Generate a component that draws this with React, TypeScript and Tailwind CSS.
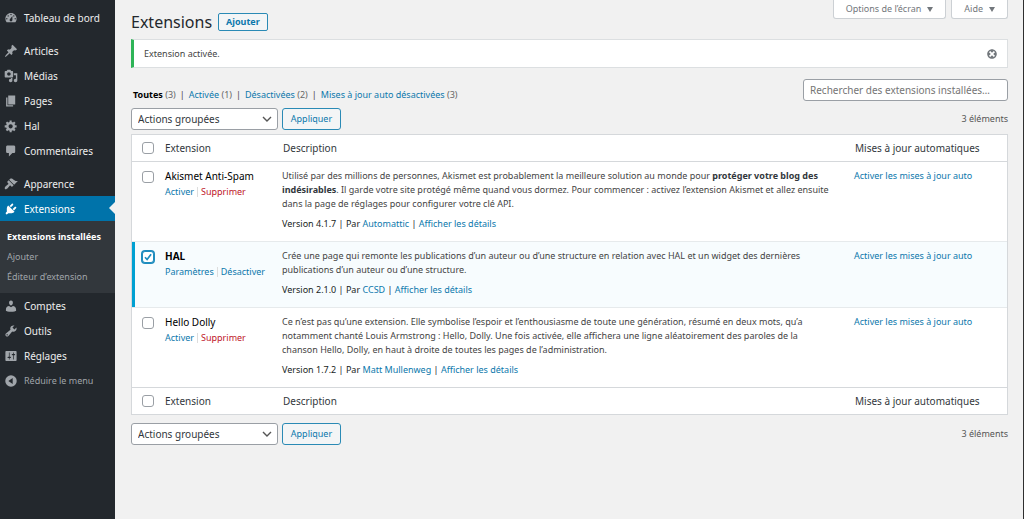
import React, { useState } from 'react';

const ICONS = {
  dashboard: 'M3.76 16h12.48c1.1-1.37 1.76-3.11 1.76-5 0-4.42-3.58-8-8-8s-8 3.58-8 8c0 1.89.66 3.63 1.76 5zM10 4c.55 0 1 .45 1 1s-.45 1-1 1-1-.45-1-1 .45-1 1-1zM6 6c.55 0 1 .45 1 1s-.45 1-1 1-1-.45-1-1 .45-1 1-1zm8 0c.55 0 1 .45 1 1s-.45 1-1 1-1-.45-1-1 .45-1 1-1zm-5.37 5.55L12 7v6c0 1.1-.9 2-2 2s-2-.9-2-2c0-.57.24-1.08.63-1.45zM4 10c.55 0 1 .45 1 1s-.45 1-1 1-1-.45-1-1 .45-1 1-1zm12 0c.55 0 1 .45 1 1s-.45 1-1 1-1-.45-1-1 .45-1 1-1z',
  post: 'M10.44 3.02l1.82-1.82 6.36 6.35-1.83 1.82c-1.05-.68-2.48-.57-3.41.36l-.75.75c-.92.93-1.04 2.35-.35 3.41l-1.83 1.82-2.41-2.41-2.8 2.79c-.42.42-3.38 2.71-3.8 2.29s1.86-3.39 2.28-3.81l2.79-2.79L4.1 9.36l1.83-1.82c1.05.69 2.48.57 3.4-.36l.75-.75c.93-.92 1.05-2.35.36-3.41z',
  media: 'M13 11V4c0-.55-.45-1-1-1h-1.67L9 1H5L3.67 3H2c-.55 0-1 .45-1 1v7c0 .55.45 1 1 1h10c.55 0 1-.45 1-1zM7 4.5c1.38 0 2.5 1.12 2.5 2.5S8.38 9.5 7 9.5 4.5 8.38 4.5 7 5.62 4.5 7 4.5zM14 6h5v10.5c0 1.38-1.12 2.5-2.5 2.5S14 17.88 14 16.5s1.12-2.5 2.5-2.5c.17 0 .34.02.5.05V9h-3V6zm-4 8.05V13h2v3.5c0 1.38-1.12 2.5-2.5 2.5S7 17.88 7 16.5 8.12 14 9.5 14c.17 0 .34.02.5.05z',
  page: 'M6 15V2h10v13H6zm-1 1h8v2H3V5h2v11z',
  generic: 'M18 12h-2.18c-.17.7-.44 1.35-.81 1.93l1.54 1.54-2.1 2.1-1.54-1.54c-.58.36-1.23.63-1.91.79V19H8v-2.18c-.68-.16-1.33-.43-1.91-.79l-1.54 1.54-2.12-2.12 1.54-1.54c-.36-.58-.63-1.23-.79-1.91H1V9.03h2.17c.16-.7.44-1.35.8-1.94L2.43 5.55l2.1-2.1 1.54 1.54c.58-.37 1.24-.64 1.93-.81V2h3v2.18c.68.16 1.33.43 1.91.79l1.54-1.54 2.12 2.12-1.54 1.54c.36.59.64 1.24.8 1.94H18V12zm-8.5 1.5c1.66 0 3-1.34 3-3s-1.34-3-3-3-3 1.34-3 3 1.34 3 3 3z',
  comments: 'M5 2h9c1.1 0 2 .9 2 2v7c0 1.1-.9 2-2 2h-2l-5 5v-5H5c-1.1 0-2-.9-2-2V4c0-1.1.9-2 2-2z',
  appearance: 'M14.48 11.06L7.41 3.99l1.5-1.5c.5-.56 2.3-.47 3.51.32 1.21.8 1.43 1.28 2.91 2.1 1.18.64 2.45 1.26 4.45.85zm-.71.71L6.7 4.7 4.93 6.47c-.39.39-.39 1.02 0 1.41l1.06 1.06c.39.39.39 1.03 0 1.42-.6.6-1.43 1.11-2.21 1.69-.35.26-.7.53-1.01.84C1.43 14.23.4 16.08 1.4 17.07c.99 1 2.84-.03 4.18-1.36.31-.31.58-.66.85-1.02.57-.78 1.08-1.61 1.69-2.21.39-.39 1.02-.39 1.41 0l1.06 1.06c.39.39 1.02.39 1.41 0z',
  plugins: 'M13.11 4.36L9.87 7.6 8 5.73l3.24-3.24c.35-.34 1.05-.2 1.56.32.52.51.66 1.21.31 1.55zm-8 1.77l.91-1.12 9.01 9.01-1.19.84c-.71.71-2.63 1.16-3.82 1.16H6.14L4.9 17.26c-.59.59-1.54.59-2.12 0-.59-.58-.59-1.53 0-2.12l1.24-1.24v-3.88c0-1.13.4-3.19 1.09-3.89zm7.26 3.97l3.24-3.24c.34-.35 1.04-.21 1.55.31.52.51.66 1.21.31 1.55l-3.24 3.25z',
  users: 'M10 9.25c-2.27 0-2.73-3.44-2.73-3.44C7 4.02 7.82 2 9.97 2c2.16 0 2.98 2.02 2.71 3.81 0 0-.41 3.44-2.68 3.44zm0 2.57L12.72 10c2.39 0 4.52 2.33 4.52 4.53v2.49s-3.65 1.13-7.24 1.13c-3.65 0-7.24-1.13-7.24-1.13v-2.49c0-2.25 1.94-4.48 4.47-4.48z',
  tools: 'M16.68 9.77c-1.34 1.34-3.3 1.67-4.95.99l-5.41 6.52c-.99.99-2.59.99-3.58 0s-.99-2.59 0-3.57l6.52-5.42c-.68-1.65-.35-3.61.99-4.95 1.28-1.28 3.12-1.62 4.72-1.06l-2.89 2.89 2.82 2.82 2.86-2.87c.53 1.58.18 3.39-1.08 4.65zM3.81 16.21c.4.39 1.04.39 1.43 0 .4-.4.4-1.04 0-1.43-.39-.4-1.03-.4-1.43 0-.39.39-.39 1.03 0 1.43z',
  settings: 'M18 16V4c0-.55-.45-1-1-1H3c-.55 0-1 .45-1 1v12c0 .55.45 1 1 1h14c.55 0 1-.45 1-1zM8 11h1c.55 0 1 .45 1 1s-.45 1-1 1H8v1.5c0 .28-.22.5-.5.5s-.5-.22-.5-.5V13H6c-.55 0-1-.45-1-1s.45-1 1-1h1V5.5c0-.28.22-.5.5-.5s.5.22.5.5V11zm5-2h-1c-.55 0-1-.45-1-1s.45-1 1-1h1V5.5c0-.28.22-.5.5-.5s.5.22.5.5V7h1c.55 0 1 .45 1 1s-.45 1-1 1h-1v5.5c0 .28-.22.5-.5.5s-.5-.22-.5-.5V9z',
  collapse: 'M10 1.8a8.2 8.2 0 1 0 0 16.4 8.2 8.2 0 0 0 0-16.4zM12.4 5.8v8.4L6.2 10z',
  dismiss: 'M10 2c4.42 0 8 3.58 8 8s-3.58 8-8 8-8-3.58-8-8 3.58-8 8-8zm5 11l-3-3 3-3-2-2-3 3-3-3-2 2 3 3-3 3 2 2 3-3 3 3z',
};

type IconName = keyof typeof ICONS;

const Icon: React.FC<{ name: IconName; className?: string }> = ({ name, className }) => (
  <svg viewBox="0 0 20 20" fill="currentColor" fillRule="evenodd" aria-hidden="true" className={className}>
    <path d={ICONS[name]} />
  </svg>
);

interface MenuEntry {
  label: string;
  icon: IconName;
  active?: boolean;
}

const MENU_GROUPS: MenuEntry[][] = [
  [{ label: 'Tableau de bord', icon: 'dashboard' }],
  [
    { label: 'Articles', icon: 'post' },
    { label: 'Médias', icon: 'media' },
    { label: 'Pages', icon: 'page' },
    { label: 'Hal', icon: 'generic' },
    { label: 'Commentaires', icon: 'comments' },
  ],
  [
    { label: 'Apparence', icon: 'appearance' },
    { label: 'Extensions', icon: 'plugins', active: true },
    { label: 'Comptes', icon: 'users' },
    { label: 'Outils', icon: 'tools' },
    { label: 'Réglages', icon: 'settings' },
  ],
];

interface Plugin {
  id: string;
  name: string;
  active: boolean;
  description: React.ReactNode;
  version: string;
  author: string;
}

const PLUGINS: Plugin[] = [
  {
    id: 'akismet',
    name: 'Akismet Anti-Spam',
    active: false,
    description: (
      <>
        Utilisé par des millions de personnes, Akismet est probablement la meilleure solution au monde pour{' '}
        <strong className="font-bold text-[#32373c]">protéger votre blog des indésirables</strong>. Il garde votre site
        protégé même quand vous dormez. Pour commencer : activez l’extension Akismet et allez ensuite dans la page de
        réglages pour configurer votre clé API.
      </>
    ),
    version: '4.1.7',
    author: 'Automattic',
  },
  {
    id: 'hal',
    name: 'HAL',
    active: true,
    description:
      'Crée une page qui remonte les publications d’un auteur ou d’une structure en relation avec HAL et un widget des dernières publications d’un auteur ou d’une structure.',
    version: '2.1.0',
    author: 'CCSD',
  },
  {
    id: 'dolly',
    name: 'Hello Dolly',
    active: false,
    description:
      'Ce n’est pas qu’une extension. Elle symbolise l’espoir et l’enthousiasme de toute une génération, résumé en deux mots, qu’a notamment chanté Louis Armstrong : Hello, Dolly. Une fois activée, elle affichera une ligne aléatoirement des paroles de la chanson Hello, Dolly, en haut à droite de toutes les pages de l’administration.',
    version: '1.7.2',
    author: 'Matt Mullenweg',
  },
];

const FILTERS = [
  { label: 'Activée', count: 1 },
  { label: 'Désactivées', count: 2 },
  { label: 'Mises à jour auto désactivées', count: 3 },
];

const Sidebar = () => (
  <nav aria-label="Menu principal" className="w-[115px] shrink-0 bg-[#23282d] pt-[5px] text-[10px] text-[#eeeeee]">
    {MENU_GROUPS.map((group, i) => (
      <ul key={i} className={i > 0 ? 'mt-2' : ''}>
        {group.map((item) => (
          <li key={item.label}>
            <a
              href="#"
              className={`relative flex h-[25px] items-center gap-1.5 pl-1 ${item.active ? 'bg-[#0073aa] text-white' : ''}`}
            >
              <Icon name={item.icon} className={`h-3.5 w-3.5 shrink-0 ${item.active ? 'text-white' : 'text-[#a0a5aa]'}`} />
              <span>{item.label}</span>
              {item.active && (
                <span className="absolute right-0 top-1.5 border-y-[6px] border-r-[6px] border-y-transparent border-r-[#f1f1f1]" />
              )}
            </a>
            {item.active && (
              <ul className="bg-[#32373c] py-1.5 text-[9px] leading-5 text-[#a0a5aa]">
                <li><a href="#" className="block pl-[7px] font-bold text-white">Extensions installées</a></li>
                <li><a href="#" className="block pl-[7px]">Ajouter</a></li>
                <li><a href="#" className="block pl-[7px]">Éditeur d’extension</a></li>
              </ul>
            )}
          </li>
        ))}
      </ul>
    ))}
    <button type="button" className="flex h-[25px] w-full items-center gap-1.5 pl-1 text-[9px] text-[#a0a5aa]">
      <Icon name="collapse" className="h-3.5 w-3.5 shrink-0" />
      <span>Réduire le menu</span>
    </button>
  </nav>
);

interface CheckProps {
  label: string;
  checked: boolean;
  onChange: (checked: boolean) => void;
}

const Check: React.FC<CheckProps> = ({ label, checked, onChange }) => (
  <div className="grid h-3 w-3">
    <input
      type="checkbox"
      aria-label={label}
      checked={checked}
      onChange={(e) => onChange(e.target.checked)}
      className="col-start-1 row-start-1 h-3 w-3 appearance-none rounded-[3px] border border-[#9a9fa5] bg-white checked:border-[#1e8cbe] checked:ring-1 checked:ring-[#1e8cbe]"
    />
    {checked && (
      <svg viewBox="0 0 12 12" fill="none" stroke="#1e8cbe" strokeWidth="1.7" className="pointer-events-none col-start-1 row-start-1 h-3 w-3">
        <path d="M3 6.2l2.1 2.3 4-5.3" />
      </svg>
    )}
  </div>
);

const BulkActions: React.FC<{ id: string }> = ({ id }) => (
  <div className="flex items-center justify-between">
    <div className="flex gap-1">
      <div className="relative">
        <select
          id={id}
          aria-label="Sélectionner l’action groupée"
          className="h-[22px] w-[147px] appearance-none rounded-[3px] border border-[#9a9fa5] bg-white pl-1.5 text-[10px] text-[#32373c]"
        >
          <option>Actions groupées</option>
        </select>
        <svg viewBox="0 0 10 10" fill="none" stroke="#555555" strokeWidth="1.4" className="pointer-events-none absolute right-1.5 top-1.5 h-2.5 w-2.5">
          <path d="M1 3l4 4 4-4" />
        </svg>
      </div>
      <button type="button" className="h-[22px] w-[59px] rounded-[3px] border border-[#2a8ab5] bg-[#f3f5f6] text-[9px] text-[#0b78ac]">
        Appliquer
      </button>
    </div>
    <span className="text-[#555555]">3 éléments</span>
  </div>
);

interface HeadingRowProps extends CheckProps {
  rowClass: string;
}

const HeadingRow: React.FC<HeadingRowProps> = ({ rowClass, ...check }) => (
  <tr className={rowClass}>
    <th className="pl-2.5"><Check {...check} /></th>
    <th scope="col" className="font-normal">Extension</th>
    <th scope="col" className="pl-px font-normal">Description</th>
    <th scope="col" className="pl-px font-normal">Mises à jour automatiques</th>
  </tr>
);

const App = () => {
  const [selected, setSelected] = useState<string[]>(['hal']);
  const all = selected.length === PLUGINS.length;

  const toggleAll = (on: boolean) => setSelected(on ? PLUGINS.map((p) => p.id) : []);
  const toggle = (id: string, on: boolean) =>
    setSelected(on ? [...selected, id] : selected.filter((s) => s !== id));

  return (
    <div className="flex min-h-screen border-r border-[#2f2f2f] bg-[#f1f1f1] font-['Noto_Sans','Open_Sans',sans-serif] text-[9px] leading-[14px] text-[#444444]">
      <Sidebar />

      <main className="min-w-0 flex-1 pl-4 pr-[15px]">
        {/* Title and screen tabs */}
        <header className="flex h-[39px] items-start justify-between">
          <div className="flex items-center gap-1.5 pt-[13px]">
            <h1 className="text-[16px] leading-[18px] text-[#23282d]">Extensions</h1>
            <a href="#" className="flex h-[18px] items-center rounded-[2px] border border-[#2a8ab5] bg-[#f3f5f6] px-[7px] font-bold text-[#0b78ac]">
              Ajouter
            </a>
          </div>
          <div className="flex gap-[5px] text-[#72777c]">
            <button type="button" className="flex h-[19px] items-center gap-1.5 rounded-b-[3px] border border-t-0 border-[#ccd0d4] bg-white px-3">
              Options de l’écran
              <svg viewBox="0 0 6 5" fill="currentColor" className="h-[5px] w-1.5"><path d="M0 0h6L3 5z" /></svg>
            </button>
            <button type="button" className="flex h-[19px] items-center gap-1.5 rounded-b-[3px] border border-t-0 border-[#ccd0d4] bg-white px-3">
              Aide
              <svg viewBox="0 0 6 5" fill="currentColor" className="h-[5px] w-1.5"><path d="M0 0h6L3 5z" /></svg>
            </button>
          </div>
        </header>

        <div role="status" className="flex h-[29px] items-center justify-between border border-l-[3px] border-[#dcdfe1] border-l-[#2eb457] bg-white pl-2.5 pr-[9px]">
          <p>Extension activée.</p>
          <button type="button" aria-label="Ignorer cette notification" className="text-[#72777c]">
            <Icon name="dismiss" className="h-3 w-3" />
          </button>
        </div>

        {/* Filters and search */}
        <div className="mt-[11px] flex items-end justify-between">
          <ul className="flex pl-0.5 leading-3">
            <li>
              <a href="#" aria-current="page" className="font-bold text-black">Toutes</a>{' '}
              <span className="text-[#666666]">(3)</span>
            </li>
            {FILTERS.map((f) => (
              <li key={f.label}>
                <span className="px-1">|</span>
                <a href="#" className="text-[#0b78ac]">{f.label}</a>{' '}
                <span className="text-[#666666]">({f.count})</span>
              </li>
            ))}
          </ul>
          <input
            type="search"
            aria-label="Rechercher des extensions installées"
            placeholder="Rechercher des extensions installées…"
            className="h-[22px] w-[205px] rounded-[3px] border border-[#9a9fa5] bg-white px-1.5 text-[10px] placeholder:text-[#757575]"
          />
        </div>

        <div className="mt-[7px]">
          <BulkActions id="bulk-action-top" />
        </div>

        {/* Plugin list */}
        <table className="mt-1 w-full table-fixed border-separate border-spacing-0 border border-[#d5d8db] bg-white text-left">
          <colgroup>
            <col className="w-[33px]" />
            <col className="w-[117px]" />
            <col />
            <col className="w-[153px]" />
          </colgroup>
          <thead className="text-[10px] text-[#32373c]">
            <HeadingRow
              rowClass="h-[27px] [&>th]:border-b [&>th]:border-[#d5d8db]"
              label="Tout sélectionner"
              checked={all}
              onChange={toggleAll}
            />
          </thead>
          <tbody>
            {PLUGINS.map((p, i) => (
              <tr
                key={p.id}
                className={`align-top [&>td]:pt-[7px] ${p.active ? 'bg-[#f7fcfe]' : ''} ${
                  i < PLUGINS.length - 1 ? '[&>td]:border-b [&>td]:border-[#e6eaec]' : '[&>td]:border-b [&>td]:border-[#d5d8db]'
                }`}
              >
                <td className={`pl-2.5 ${p.active ? 'shadow-[inset_3px_0_0_#00a0d2]' : ''}`}>
                  <div className="pt-0.5">
                    <Check label={`Sélectionner ${p.name}`} checked={selected.includes(p.id)} onChange={(on) => toggle(p.id, on)} />
                  </div>
                </td>
                <td>
                  <strong className={`block text-[10px] text-black ${p.active ? 'font-bold' : 'font-normal'}`}>{p.name}</strong>
                  <div className="mt-0.5 flex gap-[3px] whitespace-nowrap">
                    <a href="#" className="text-[#0b78ac]">{p.active ? 'Paramètres' : 'Activer'}</a>
                    <span className="h-2.5 w-px self-center bg-[#dddddd]" />
                    {p.active ? (
                      <a href="#" className="text-[#0b78ac]">Désactiver</a>
                    ) : (
                      <a href="#" className="text-[#be1428]">Supprimer</a>
                    )}
                  </div>
                </td>
                <td className="pb-2.5 pr-5">
                  <p>{p.description}</p>
                  <p className="mt-1.5 text-[#191e23]">
                    Version {p.version} | Par <a href="#" className="text-[#0b78ac]">{p.author}</a> |{' '}
                    <a href="#" className="text-[#0b78ac]">Afficher les détails</a>
                  </p>
                </td>
                <td>
                  <a href="#" className="text-[#0b78ac]">Activer les mises à jour auto</a>
                </td>
              </tr>
            ))}
          </tbody>
          <tfoot className="text-[10px] text-[#32373c]">
            <HeadingRow rowClass="h-[26px]" label="Tout sélectionner (bas)" checked={all} onChange={toggleAll} />
          </tfoot>
        </table>

        <div className="mt-2">
          <BulkActions id="bulk-action-bottom" />
        </div>
      </main>
    </div>
  );
};

export default App;
